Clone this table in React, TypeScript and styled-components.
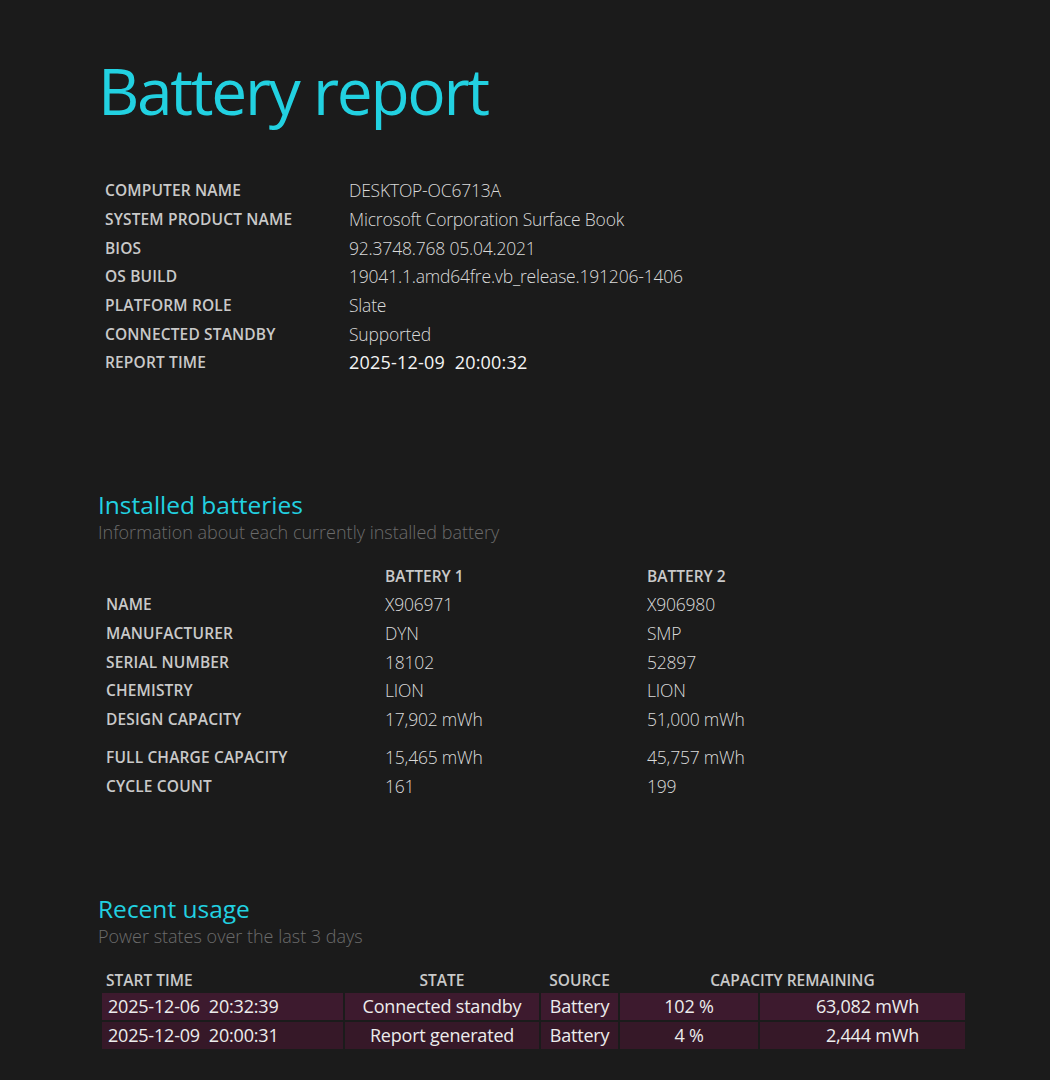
import React from "react";
import styled, { createGlobalStyle } from "styled-components";

const Global = createGlobalStyle`
  html, body { margin: 0; padding: 0; background: #1b1b1b; }
  body { font-family: "Open Sans", "Noto Sans", sans-serif; color: #d6d6d6; }
`;

const Page = styled.div`
  width: 1050px;
  height: 1080px;
  box-sizing: border-box;
  background: #1b1b1b;
  padding: 49px 0 0 98px;
  overflow: hidden;
`;

const Title = styled.h1`
  margin: 0;
  font-size: 64px;
  line-height: 84px;
  font-weight: 400;
  color: #22d1e1;
  letter-spacing: -2.3px;
`;

const InfoGrid = styled.div`
  display: grid;
  grid-template-columns: 244px auto;
  grid-auto-rows: 28.7px;
  align-items: center;
  margin: 43px 0 0 7px;
`;

const Label = styled.div`
  font-size: 15.5px;
  font-weight: 600;
  color: #c9c9c9;
  letter-spacing: 0.15px;
  white-space: nowrap;
`;

const Value = styled.div<{ $strong?: boolean }>`
  font-size: ${(p) => (p.$strong ? "18px" : "17.5px")};
  font-weight: ${(p) => (p.$strong ? 400 : 300)};
  color: ${(p) => (p.$strong ? "#f4f4f4" : "#dadada")};
  letter-spacing: ${(p) => (p.$strong ? "0.2px" : "-0.2px")};
  white-space: nowrap;
`;

const Section = styled.section<{ $top: number }>`
  margin-top: ${(p) => p.$top}px;
`;

const SectionTitle = styled.h2`
  margin: 0;
  font-size: 24.5px;
  line-height: 28px;
  font-weight: 400;
  color: #22d1e1;
`;

const SectionSub = styled.div`
  font-size: 18px;
  line-height: 26px;
  font-weight: 300;
  color: #6b6b6b;
`;

const BatteryGrid = styled.div`
  display: grid;
  grid-template-columns: 279px 262px auto;
  align-items: center;
  margin: 17px 0 0 8px;
  & > * {
    line-height: 28.6px;
  }
`;

const BatteryHead = styled.div`
  font-size: 15.5px;
  font-weight: 600;
  color: #c9c9c9;
`;

const Spacer = styled.div`
  grid-column: 1 / -1;
  height: 10px;
  && {
    line-height: 0;
  }
`;

const UsageTable = styled.table`
  margin: 18px 0 0 2px;
  border-collapse: separate;
  border-spacing: 2px 2px;
  font-size: 18px;
`;

const Th = styled.th<{ $align?: string }>`
  font-size: 15.5px;
  font-weight: 600;
  color: #c9c9c9;
  text-align: ${(p) => p.$align || "center"};
  padding: 0 4px;
  height: 22px;
  vertical-align: middle;
  white-space: nowrap;
`;

const Row = styled.tr<{ $dark?: boolean }>`
  td {
    background: ${(p) => (p.$dark ? "#361828" : "#3d1a2e")};
  }
`;

const Td = styled.td<{ $align?: string; $w: number }>`
  width: ${(p) => p.$w}px;
  height: 27px;
  box-sizing: border-box;
  padding: 0 6px;
  text-align: ${(p) => p.$align || "center"};
  color: #ececec;
  font-weight: 400;
  letter-spacing: -0.2px;
  white-space: nowrap;
  vertical-align: middle;
`;

const info: [string, string][] = [
  ["COMPUTER NAME", "DESKTOP-OC6713A"],
  ["SYSTEM PRODUCT NAME", "Microsoft Corporation Surface Book"],
  ["BIOS", "92.3748.768 05.04.2021"],
  ["OS BUILD", "19041.1.amd64fre.vb_release.191206-1406"],
  ["PLATFORM ROLE", "Slate"],
  ["CONNECTED STANDBY", "Supported"],
];

const batteries: [string, string, string][] = [
  ["NAME", "X906971", "X906980"],
  ["MANUFACTURER", "DYN", "SMP"],
  ["SERIAL NUMBER", "18102", "52897"],
  ["CHEMISTRY", "LION", "LION"],
  ["DESIGN CAPACITY", "17,902 mWh", "51,000 mWh"],
];

const batteries2: [string, string, string][] = [
  ["FULL CHARGE CAPACITY", "15,465 mWh", "45,757 mWh"],
  ["CYCLE COUNT", "161", "199"],
];

const usage = [
  ["2025-12-06\u00a0\u00a020:32:39", "Connected standby", "Battery", "102 %", "63,082 mWh"],
  ["2025-12-09\u00a0\u00a020:00:31", "Report generated", "Battery", "4 %", "2,444 mWh"],
];

export default function App() {
  return (
    <Page>
      <Global />
      <Title>Battery report</Title>
      <InfoGrid>
        {info.map(([k, v]) => (
          <React.Fragment key={k}>
            <Label>{k}</Label>
            <Value>{v}</Value>
          </React.Fragment>
        ))}
        <Label>REPORT TIME</Label>
        <Value $strong>2025-12-09&nbsp;&nbsp;20:00:32</Value>
      </InfoGrid>

      <Section $top={114}>
        <SectionTitle>Installed batteries</SectionTitle>
        <SectionSub>Information about each currently installed battery</SectionSub>
        <BatteryGrid>
          <div />
          <BatteryHead>BATTERY 1</BatteryHead>
          <BatteryHead>BATTERY 2</BatteryHead>
          {batteries.map(([k, a, b]) => (
            <React.Fragment key={k}>
              <Label>{k}</Label>
              <Value>{a}</Value>
              <Value>{b}</Value>
            </React.Fragment>
          ))}
          <Spacer />
          {batteries2.map(([k, a, b]) => (
            <React.Fragment key={k}>
              <Label>{k}</Label>
              <Value>{a}</Value>
              <Value>{b}</Value>
            </React.Fragment>
          ))}
        </BatteryGrid>
      </Section>

      <Section $top={94}>
        <SectionTitle>Recent usage</SectionTitle>
        <SectionSub>Power states over the last 3 days</SectionSub>
        <UsageTable>
          <thead>
            <tr>
              <Th $align="left">START TIME</Th>
              <Th>STATE</Th>
              <Th>SOURCE</Th>
              <Th colSpan={2}>CAPACITY REMAINING</Th>
            </tr>
          </thead>
          <tbody>
            {usage.map((r, i) => (
              <Row key={i} $dark={i === 1}>
                <Td $align="left" $w={241}>{r[0]}</Td>
                <Td $w={194}>{r[1]}</Td>
                <Td $w={77}>{r[2]}</Td>
                <Td $w={138}>{r[3]}</Td>
                <Td $align="right" $w={205} style={{ paddingRight: 46 }}>{r[4]}</Td>
              </Row>
            ))}
          </tbody>
        </UsageTable>
      </Section>
    </Page>
  );
}
